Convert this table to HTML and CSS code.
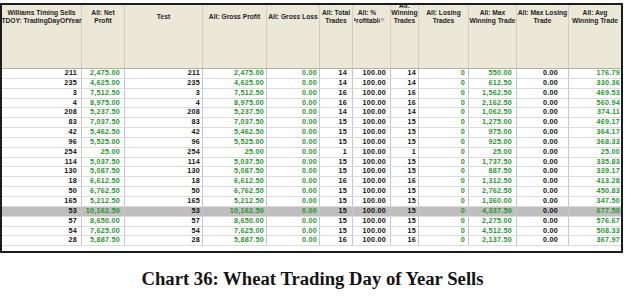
FILE: index.html
```html
<!DOCTYPE html>
<html>
<head>
<meta charset="utf-8">
<link rel="stylesheet" href="styles.css">
</head>
<body>
<div class="frame">
  <div class="hrow">
    <div class="hcell"><div class="hlabel"><span>Williams Timing Sells</span><span>TDOY: TradingDayOfYear</span></div></div>
    <div class="hcell"><div class="hlabel"><span>All: Net</span><span>Profit</span></div></div>
    <div class="hcell"><div class="hlabel"><span>Test</span></div></div>
    <div class="hcell"><div class="hlabel"><span>All: Gross Profit</span></div></div>
    <div class="hcell"><div class="hlabel"><span>All: Gross Loss</span></div></div>
    <div class="hcell"><div class="hlabel"><span>All: Total</span><span>Trades</span></div></div>
    <div class="hcell hcell--sort"><div class="hlabel hlabel--clip"><span>All: %</span><span>Profitable</span></div><svg class="sort" width="5" height="4" viewBox="0 0 5 4"><path d="M0 0H5L2.5 4Z" fill="#b4b4b4"/></svg></div>
    <div class="hcell"><div class="hlabel hlabel--bottom"><span>All:</span><span>Winning</span><span>Trades</span></div></div>
    <div class="hcell"><div class="hlabel"><span>All: Losing</span><span>Trades</span></div></div>
    <div class="hcell"><div class="hlabel"><span>All: Max</span><span>Winning Trade</span></div></div>
    <div class="hcell"><div class="hlabel"><span>All: Max Losing</span><span>Trade</span></div></div>
    <div class="hcell"><div class="hlabel"><span>All: Avg</span><span>Winning Trade</span></div></div>
  </div>
  <div class="row"><div class="cell">211</div><div class="cell">2,475.00</div><div class="cell">211</div><div class="cell">2,475.00</div><div class="cell">0.00</div><div class="cell">14</div><div class="cell">100.00</div><div class="cell">14</div><div class="cell">0</div><div class="cell">550.00</div><div class="cell">0.00</div><div class="cell">176.79</div></div>
  <div class="row"><div class="cell">235</div><div class="cell">4,625.00</div><div class="cell">235</div><div class="cell">4,625.00</div><div class="cell">0.00</div><div class="cell">14</div><div class="cell">100.00</div><div class="cell">14</div><div class="cell">0</div><div class="cell">612.50</div><div class="cell">0.00</div><div class="cell">330.36</div></div>
  <div class="row"><div class="cell">3</div><div class="cell">7,512.50</div><div class="cell">3</div><div class="cell">7,512.50</div><div class="cell">0.00</div><div class="cell">16</div><div class="cell">100.00</div><div class="cell">16</div><div class="cell">0</div><div class="cell">1,562.50</div><div class="cell">0.00</div><div class="cell">469.53</div></div>
  <div class="row"><div class="cell">4</div><div class="cell">8,975.00</div><div class="cell">4</div><div class="cell">8,975.00</div><div class="cell">0.00</div><div class="cell">16</div><div class="cell">100.00</div><div class="cell">16</div><div class="cell">0</div><div class="cell">2,162.50</div><div class="cell">0.00</div><div class="cell">560.94</div></div>
  <div class="row"><div class="cell">208</div><div class="cell">5,237.50</div><div class="cell">208</div><div class="cell">5,237.50</div><div class="cell">0.00</div><div class="cell">14</div><div class="cell">100.00</div><div class="cell">14</div><div class="cell">0</div><div class="cell">1,062.50</div><div class="cell">0.00</div><div class="cell">374.11</div></div>
  <div class="row"><div class="cell">83</div><div class="cell">7,037.50</div><div class="cell">83</div><div class="cell">7,037.50</div><div class="cell">0.00</div><div class="cell">15</div><div class="cell">100.00</div><div class="cell">15</div><div class="cell">0</div><div class="cell">1,275.00</div><div class="cell">0.00</div><div class="cell">469.17</div></div>
  <div class="row"><div class="cell">42</div><div class="cell">5,462.50</div><div class="cell">42</div><div class="cell">5,462.50</div><div class="cell">0.00</div><div class="cell">15</div><div class="cell">100.00</div><div class="cell">15</div><div class="cell">0</div><div class="cell">975.00</div><div class="cell">0.00</div><div class="cell">364.17</div></div>
  <div class="row"><div class="cell">96</div><div class="cell">5,525.00</div><div class="cell">96</div><div class="cell">5,525.00</div><div class="cell">0.00</div><div class="cell">15</div><div class="cell">100.00</div><div class="cell">15</div><div class="cell">0</div><div class="cell">925.00</div><div class="cell">0.00</div><div class="cell">368.33</div></div>
  <div class="row"><div class="cell">254</div><div class="cell">25.00</div><div class="cell">254</div><div class="cell">25.00</div><div class="cell">0.00</div><div class="cell">1</div><div class="cell">100.00</div><div class="cell">1</div><div class="cell">0</div><div class="cell">25.00</div><div class="cell">0.00</div><div class="cell">25.00</div></div>
  <div class="row"><div class="cell">114</div><div class="cell">5,037.50</div><div class="cell">114</div><div class="cell">5,037.50</div><div class="cell">0.00</div><div class="cell">15</div><div class="cell">100.00</div><div class="cell">15</div><div class="cell">0</div><div class="cell">1,737.50</div><div class="cell">0.00</div><div class="cell">335.83</div></div>
  <div class="row"><div class="cell">130</div><div class="cell">5,087.50</div><div class="cell">130</div><div class="cell">5,087.50</div><div class="cell">0.00</div><div class="cell">15</div><div class="cell">100.00</div><div class="cell">15</div><div class="cell">0</div><div class="cell">887.50</div><div class="cell">0.00</div><div class="cell">339.17</div></div>
  <div class="row"><div class="cell">18</div><div class="cell">6,612.50</div><div class="cell">18</div><div class="cell">6,612.50</div><div class="cell">0.00</div><div class="cell">16</div><div class="cell">100.00</div><div class="cell">16</div><div class="cell">0</div><div class="cell">1,312.50</div><div class="cell">0.00</div><div class="cell">413.28</div></div>
  <div class="row"><div class="cell">50</div><div class="cell">6,762.50</div><div class="cell">50</div><div class="cell">6,762.50</div><div class="cell">0.00</div><div class="cell">15</div><div class="cell">100.00</div><div class="cell">15</div><div class="cell">0</div><div class="cell">2,762.50</div><div class="cell">0.00</div><div class="cell">450.83</div></div>
  <div class="row"><div class="cell">165</div><div class="cell">5,212.50</div><div class="cell">165</div><div class="cell">5,212.50</div><div class="cell">0.00</div><div class="cell">15</div><div class="cell">100.00</div><div class="cell">15</div><div class="cell">0</div><div class="cell">1,360.00</div><div class="cell">0.00</div><div class="cell">347.50</div></div>
  <div class="row row--hl"><div class="cell">53</div><div class="cell">10,162.50</div><div class="cell">53</div><div class="cell">10,162.50</div><div class="cell">0.00</div><div class="cell">15</div><div class="cell">100.00</div><div class="cell">15</div><div class="cell">0</div><div class="cell">4,337.50</div><div class="cell">0.00</div><div class="cell">677.50</div></div>
  <div class="row"><div class="cell">57</div><div class="cell">8,650.00</div><div class="cell">57</div><div class="cell">8,650.00</div><div class="cell">0.00</div><div class="cell">15</div><div class="cell">100.00</div><div class="cell">15</div><div class="cell">0</div><div class="cell">2,275.00</div><div class="cell">0.00</div><div class="cell">576.67</div></div>
  <div class="row"><div class="cell">54</div><div class="cell">7,625.00</div><div class="cell">54</div><div class="cell">7,625.00</div><div class="cell">0.00</div><div class="cell">15</div><div class="cell">100.00</div><div class="cell">15</div><div class="cell">0</div><div class="cell">4,512.50</div><div class="cell">0.00</div><div class="cell">508.33</div></div>
  <div class="row"><div class="cell">28</div><div class="cell">5,887.50</div><div class="cell">28</div><div class="cell">5,887.50</div><div class="cell">0.00</div><div class="cell">16</div><div class="cell">100.00</div><div class="cell">16</div><div class="cell">0</div><div class="cell">2,137.50</div><div class="cell">0.00</div><div class="cell">367.97</div></div>
</div>
<p class="caption">Chart 36: Wheat Trading Day of Year Sells</p>
</body>
</html>
```

FILE: styles.css
```css
html, body {
  margin: 0;
  background: #ffffff;
}
body {
  font-family: "Liberation Sans", Arial, sans-serif;
  color: #111111;
}
.frame {
  margin-top: 3px;
  width: 623px;
  height: 250px;
  box-sizing: border-box;
  border: 2px solid #1c1c1c;
  overflow: hidden;
}
.hrow,
.row {
  display: grid;
  grid-template-columns: 80px 43px 78px 64px 53px 33px 38px 28px 50px 48px 52px 52px;
}
.hrow {
  height: 64px;
  box-sizing: border-box;
  background: #ebe8d8;
  border-bottom: 1px solid #b4b1a2;
}
.hcell {
  position: relative;
  padding-top: 4px;
  border-right: 1px solid #d2cfbf;
}
.hcell:last-child {
  border-right: 0;
}
.hlabel {
  height: 15px;
  display: flex;
  flex-direction: column;
  align-items: center;
  justify-content: center;
  font-weight: bold;
  font-size: 6.7px;
  line-height: 7.4px;
  color: #1e1e1e;
  white-space: nowrap;
}
.hlabel--bottom {
  justify-content: flex-end;
}
.hlabel--clip {
  margin-left: 1px;
  margin-right: 10px;
  overflow: hidden;
}
.sort {
  position: absolute;
  right: 5px;
  top: 13px;
}
.row {
  height: 9.85px;
  box-sizing: border-box;
  border-bottom: 1px solid #dcdcdc;
  font-weight: bold;
  font-size: 7.2px;
  line-height: 8.85px;
  letter-spacing: 0.25px;
}
.row--hl {
  background: #bebebe;
}
.cell {
  text-align: right;
  white-space: nowrap;
  overflow: hidden;
  border-right: 1px solid #c6c6c6;
  color: #111111;
}
.cell:last-child {
  border-right: 0;
}
.row > .cell:nth-child(3) {
  border-right-color: #b9c3d8;
}
.row > .cell:nth-child(2),
.row > .cell:nth-child(4),
.row > .cell:nth-child(5),
.row > .cell:nth-child(9),
.row > .cell:nth-child(10),
.row > .cell:nth-child(12) {
  color: #23982b;
}
.row > .cell:nth-child(1) { padding-right: 4px; }
.row > .cell:nth-child(2) { padding-right: 4px; }
.row > .cell:nth-child(3) { padding-right: 2px; }
.row > .cell:nth-child(4) { padding-right: 2px; }
.row > .cell:nth-child(5) { padding-right: 2px; }
.row > .cell:nth-child(6) { padding-right: 5px; }
.row > .cell:nth-child(7) { padding-right: 4px; }
.row > .cell:nth-child(8) { padding-right: 2px; }
.row > .cell:nth-child(9) { padding-right: 3px; }
.row > .cell:nth-child(10) { padding-right: 4px; }
.row > .cell:nth-child(11) { padding-right: 10px; }
.row > .cell:nth-child(12) { padding-right: 1px; }
.caption {
  margin: 15px 0 0;
  text-align: center;
  font-family: "Liberation Serif", "Times New Roman", serif;
  font-weight: bold;
  font-size: 18.7px;
  line-height: 21px;
  color: #141414;
}
```
